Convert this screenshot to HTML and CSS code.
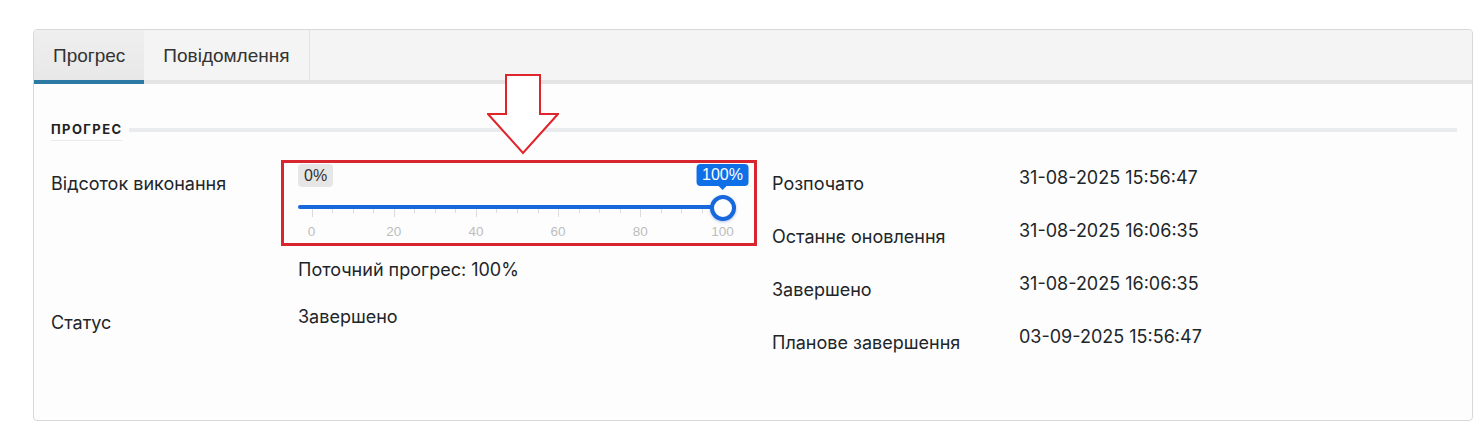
FILE: index.html
```html
<!DOCTYPE html>
<html lang="uk">
<head>
    <meta charset="UTF-8">
    <meta name="viewport" content="width=device-width, initial-scale=1.0">
    <title>Прогрес</title>
    <link rel="stylesheet" href="styles.css">
</head>
<body>
    <div class="panel">
        <div class="tabs">
            <div class="tab active">Прогрес</div>
            <div class="tab">Повідомлення</div>
        </div>

        <div class="tab-content">
            <div class="section-title">
                <span>Прогрес</span>
                <div class="section-line"></div>
            </div>

            <div class="details">
                <div class="column">
                    <div class="row">
                        <div class="label">Відсоток виконання</div>
                        <div class="value">
                            <div class="slider">
                                <span class="irs-min">0%</span>
                                <div class="irs-line"></div>
                                <div class="irs-scale">
                                    <span class="tick major" style="left:0%"></span>
                                    <span class="tick" style="left:5%"></span>
                                    <span class="tick" style="left:10%"></span>
                                    <span class="tick" style="left:15%"></span>
                                    <span class="tick major" style="left:20%"></span>
                                    <span class="tick" style="left:25%"></span>
                                    <span class="tick" style="left:30%"></span>
                                    <span class="tick" style="left:35%"></span>
                                    <span class="tick major" style="left:40%"></span>
                                    <span class="tick" style="left:45%"></span>
                                    <span class="tick" style="left:50%"></span>
                                    <span class="tick" style="left:55%"></span>
                                    <span class="tick major" style="left:60%"></span>
                                    <span class="tick" style="left:65%"></span>
                                    <span class="tick" style="left:70%"></span>
                                    <span class="tick" style="left:75%"></span>
                                    <span class="tick major" style="left:80%"></span>
                                    <span class="tick" style="left:85%"></span>
                                    <span class="tick" style="left:90%"></span>
                                    <span class="tick" style="left:95%"></span>
                                    <span class="tick major" style="left:100%"></span>

                                    <span class="grid-num" style="left:0%">0</span>
                                    <span class="grid-num" style="left:20%">20</span>
                                    <span class="grid-num" style="left:40%">40</span>
                                    <span class="grid-num" style="left:60%">60</span>
                                    <span class="grid-num" style="left:80%">80</span>
                                    <span class="grid-num" style="left:100%">100</span>

                                    <span class="irs-single" style="left:100%">100%</span>
                                    <span class="irs-handle" style="left:100%"></span>
                                </div>
                                <div class="highlight"></div>
                            </div>
                            <div class="current">Поточний прогрес: 100%</div>
                        </div>
                    </div>
                    <div class="row">
                        <div class="label">Статус</div>
                        <div class="value">Завершено</div>
                    </div>
                </div>

                <div class="column">
                    <div class="row">
                        <div class="label">Розпочато</div>
                        <div class="value">31-08-2025 15:56:47</div>
                    </div>
                    <div class="row">
                        <div class="label">Останнє оновлення</div>
                        <div class="value">31-08-2025 16:06:35</div>
                    </div>
                    <div class="row">
                        <div class="label">Завершено</div>
                        <div class="value">31-08-2025 16:06:35</div>
                    </div>
                    <div class="row">
                        <div class="label">Планове завершення</div>
                        <div class="value">03-09-2025 15:56:47</div>
                    </div>
                </div>
            </div>
        </div>

        <!-- annotation arrow -->
        <svg class="arrow" width="72" height="82" viewBox="0 0 72 82">
            <polygon points="19,2 53,2 53,41 71,41 36,80 1,41 19,41" fill="#fff" stroke="#e0242b" stroke-width="2"/>
        </svg>
    </div>
</body>
</html>
```

FILE: styles.css
```css
body {
    font-family: Inter, "Noto Sans", sans-serif;
    margin: 0;
    padding: 0;
    background-color: #fff;
    color: #212529;
}
.panel {
    position: relative;
    width: 1440px;
    margin: 29px 0 0 33px;
    border: 1px solid #d8d8d8;
    border-radius: 4px;
    box-sizing: border-box;
    background-color: #fdfdfd;
}
.tabs {
    display: flex;
    height: 50px;
    background-color: #f4f4f4;
    border-bottom: 4px solid #e4e4e4;
    border-radius: 4px 4px 0 0;
}
.tab {
    font-family: "Liberation Sans", Arial, sans-serif;
    font-size: 19px;
    color: #333;
    padding: 1px 19px 0;
    line-height: 49px;
    margin-bottom: -4px;
    border-bottom: 4px solid transparent;
    border-right: 1px solid #e4e4e4;
}
.tab.active {
    background: linear-gradient(#efefef, #e8e8e8);
    border-bottom-color: #2c7aa3;
    border-right: none;
    border-radius: 4px 0 0 0;
}
.tab-content {
    height: 336px;
    box-sizing: border-box;
    padding: 37px 15px 0 17px;
}
.section-title {
    display: flex;
    align-items: flex-start;
}
.section-title span {
    font-size: 13px;
    font-weight: 700;
    line-height: 16px;
    letter-spacing: 1.4px;
    text-transform: uppercase;
    color: #222;
    padding-bottom: 3px;
    border-bottom: 1px solid #ebebeb;
}
.section-line {
    flex: 1;
    height: 4px;
    margin: 7px 0 0 7px;
    background-color: #e9ebee;
}
.details {
    display: grid;
    grid-template-columns: 721px 1fr;
    margin-top: 25px;
}
.row {
    display: grid;
    grid-template-columns: 247px 1fr;
    margin-bottom: 23px;
    font-size: 18px;
    line-height: 24px;
}
.label {
    padding-top: 6px;
}
.slider {
    position: relative;
    width: 438px;
    height: 86px;
    margin-top: -6px;
    font-family: "Liberation Sans", Arial, sans-serif;
}
.irs-min {
    position: absolute;
    top: 4px;
    left: 0;
    height: 23px;
    line-height: 23px;
    padding: 0 6px;
    font-size: 16px;
    color: #333;
    background-color: #e6e6e6;
    border-radius: 4px;
}
.irs-line {
    position: absolute;
    top: 45px;
    left: 0;
    right: 0;
    height: 4px;
    border-radius: 2px;
    background-color: #1668dc;
}
.irs-scale {
    position: absolute;
    top: 0;
    bottom: 0;
    left: 13.5px;
    right: 13.5px;
}
.tick {
    position: absolute;
    top: 49px;
    width: 1px;
    height: 4px;
    background-color: #dcdcdc;
}
.tick.major {
    height: 8px;
}
.grid-num {
    position: absolute;
    top: 64px;
    transform: translateX(-50%);
    font-size: 13.5px;
    line-height: 16px;
    color: #bdbdbd;
}
.irs-single {
    position: absolute;
    top: 4px;
    transform: translateX(-50%);
    height: 22px;
    line-height: 22px;
    padding: 0 6px;
    font-size: 16px;
    color: #fff;
    background-color: #0f6fe6;
    border-radius: 4px;
}
.irs-single::after {
    content: "";
    position: absolute;
    left: 50%;
    bottom: -8px;
    margin-left: -4px;
    border: 4px solid transparent;
    border-top-color: #0f6fe6;
}
.irs-handle {
    position: absolute;
    top: 35px;
    width: 26px;
    height: 26px;
    margin-left: -13px;
    box-sizing: border-box;
    border: 4px solid #1668dc;
    border-radius: 50%;
    background-color: #fff;
    box-shadow: 0 1px 3px rgba(0, 60, 200, 0.3);
}
.highlight {
    position: absolute;
    top: 0;
    left: -17px;
    width: 476px;
    height: 86px;
    box-sizing: border-box;
    border: 3px solid #d7262f;
}
.current {
    margin-top: 12px;
}
.arrow {
    position: absolute;
    left: 453px;
    top: 43px;
}
```
